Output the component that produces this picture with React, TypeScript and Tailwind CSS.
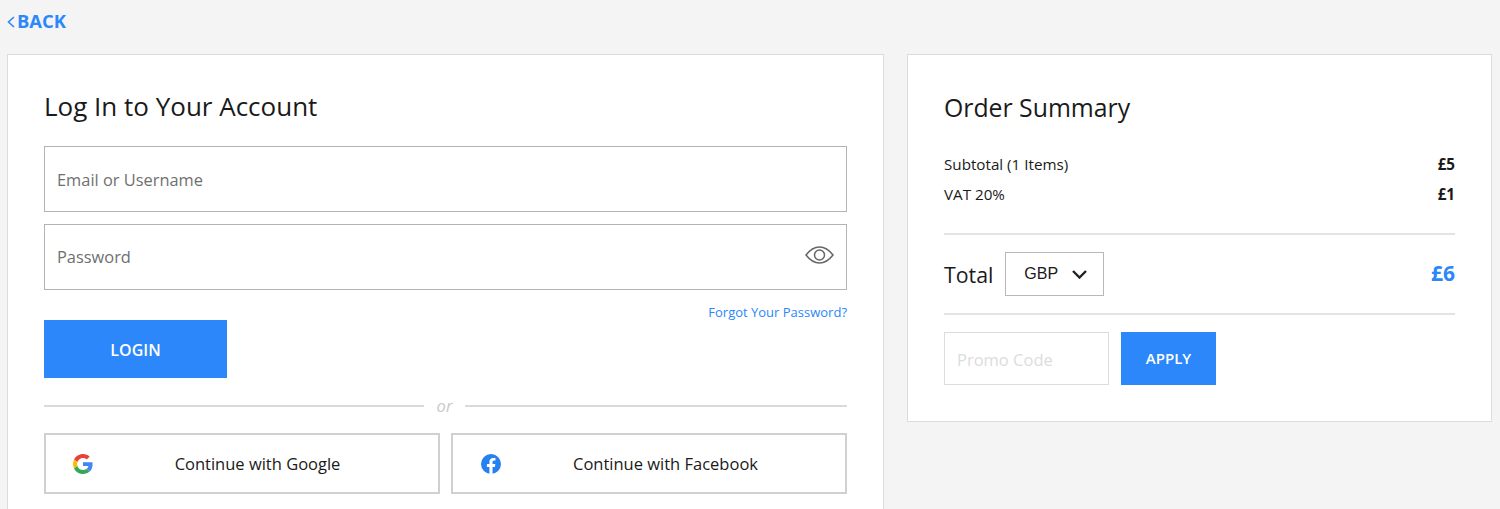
export default function App() {
  const font = { fontFamily: '"Open Sans", sans-serif' };
  return (
    <div style={font} className="h-[509px] overflow-hidden bg-[#f4f4f4] text-[#1a1a1a]">
      <div className="flex h-[54px] items-start pl-[7px] pt-[8px]">
        <a className="flex h-[26px] items-center gap-[2px] text-[18.400px] font-bold leading-[26px] text-[#2b87fa]">
          <svg width="8" height="12" viewBox="0 0 8 12" fill="none" stroke="#2b87fa" strokeWidth="1.6" className="mt-[1px]">
            <path d="M7 1 1.500 6 7 11" />
          </svg>
          BACK
        </a>
      </div>
      <div className="flex items-start pl-[7px] pr-2 gap-[23px]">
        <div className="h-[600px] w-[877px] shrink-0 border border-[#dcdcdc] bg-white px-[36px] pt-[32px]">
          <h1 className="h-[38px] text-[26px] font-normal leading-[38px]">Log In to Your Account</h1>
          <div className="mt-[21px] flex h-[66px] items-center border border-[#b3b3b3] pl-3 pt-[2px] text-[16.400px] text-[#6f6f6f]">Email or Username</div>
          <div className="mt-3 flex h-[66px] items-center justify-between border border-[#b3b3b3] pl-3 pr-[12px] text-[16.400px] text-[#6f6f6f]">
            <span>Password</span>
            <svg className="mb-[4px]" width="29" height="18" viewBox="0 0 29 18" fill="none" stroke="#666" strokeWidth="1.500">
              <path d="M1 9C5 3.800 9.500 1 14.500 1S24 3.800 28 9c-4 5.200-8.500 8-13.500 8S5 14.200 1 9Z" />
              <circle cx="14.500" cy="9" r="5" />
            </svg>
          </div>
          <div className="mt-[13px] h-[18px] text-right text-[13px] leading-[18px] text-[#2b87fa]">Forgot Your Password?</div>
          <button className="mt-[-1px] block h-[58px] w-[183px] bg-[#2b87fa] pt-[2px] text-[16px] font-semibold text-white">LOGIN</button>
          <div className="mt-[18px] flex h-[20px] items-center">
            <div className="h-[2px] w-[380px] bg-[#dadada]" />
            <span className="flex-1 text-center text-[16.500px] italic text-[#c9c9c9]">or</span>
            <div className="h-[2px] w-[382px] bg-[#dadada]" />
          </div>
          <div className="mt-[17px] flex gap-[11px]">
            <button className="relative flex h-[61px] w-[396px] items-center justify-center border-2 border-[#d0d0d0] pl-[31px] pt-[2px] text-[16.500px]">
              <svg className="absolute left-[27px] top-[19px]" width="20" height="20" viewBox="0 0 48 48">
                <path fill="#EA4335" d="M24 9.500c3.540 0 6.710 1.220 9.210 3.600l6.850-6.850C35.900 2.380 30.470 0 24 0 14.620 0 6.510 5.380 2.560 13.220l7.980 6.190C12.430 13.720 17.740 9.500 24 9.500z" />
                <path fill="#4285F4" d="M46.980 24.550c0-1.570-.15-3.090-.38-4.550H24v9.020h12.940c-.58 2.960-2.260 5.480-4.780 7.180l7.730 6c4.510-4.180 7.090-10.360 7.090-17.650z" />
                <path fill="#FBBC05" d="M10.530 28.590c-.48-1.450-.76-2.990-.76-4.590s.27-3.140.76-4.590l-7.980-6.190C.92 16.460 0 20.120 0 24c0 3.880.92 7.540 2.560 10.780l7.970-6.190z" />
                <path fill="#34A853" d="M24 48c6.480 0 11.930-2.130 15.890-5.810l-7.730-6c-2.150 1.450-4.920 2.300-8.160 2.300-6.260 0-11.570-4.220-13.470-9.910l-7.980 6.190C6.510 42.620 14.620 48 24 48z" />
              </svg>
              Continue with Google
            </button>
            <button className="relative flex h-[61px] w-[396px] items-center justify-center border-2 border-[#d0d0d0] pl-[33px] pt-[2px] text-[16.500px]">
              <svg className="absolute left-[28px] top-[19px]" width="20" height="20" viewBox="0 0 24 24">
                <circle cx="12" cy="12" r="12" fill="#2581f2" />
                <path fill="#fff" d="M16.670 15.470 17.200 12h-3.330V9.750c0-.95.470-1.870 1.950-1.870h1.510V4.930s-1.370-.23-2.680-.23c-2.740 0-4.530 1.660-4.530 4.670V12H7.070v3.470h3.050V24a12 12 0 0 0 3.750 0v-8.530h2.800Z" />
              </svg>
              Continue with Facebook
            </button>
          </div>
        </div>
        <div className="h-[368px] flex-1 border border-[#dcdcdc] bg-white px-[36px] pt-[33px]">
          <h2 className="h-[38px] text-[24.800px] font-normal leading-[38px]">Order Summary</h2>
          <div className="mt-[27px] flex h-[22px] items-center justify-between text-[15.200px]">
            <span>Subtotal (1 Items)</span><b className="font-bold">£5</b>
          </div>
          <div className="mt-[8px] flex h-[22px] items-center justify-between text-[15.200px]">
            <span>VAT 20%</span><b className="font-bold">£1</b>
          </div>
          <div className="mt-[28px] h-[2px] bg-[#e3e3e3]" />
          <div className="flex h-[80px] items-center justify-between border-b-2 border-[#e3e3e3] pb-[1px]">
            <div className="flex items-center gap-3">
              <span className="pt-[2px] text-[21.300px]">Total</span>
              <div className="flex h-[44px] w-[99px] items-center justify-between border border-[#b8b8b8] pl-[18px] pr-[16px] pt-[1px] text-[16px]" style={{ fontFamily: '"Liberation Sans", sans-serif' }}>
                <span>GBP</span>
                <svg width="15" height="9" viewBox="0 0 15 9" fill="none" stroke="#222" strokeWidth="2.400">
                  <path d="M1 1l6.500 6.500L14 1" />
                </svg>
              </div>
            </div>
            <b className="pt-[1px] text-[21px] font-bold text-[#2b87fa]">£6</b>
          </div>
          <div className="mt-[17px] flex gap-3">
            <div className="flex h-[53px] w-[165px] items-center border border-[#dcdcdc] pl-[12px] pt-[3px] text-[16.500px] text-[#dcdcdc]">Promo Code</div>
            <button className="h-[53px] w-[95px] bg-[#2b87fa] text-[15px] font-semibold text-white">APPLY</button>
          </div>
        </div>
      </div>
    </div>
  );
}
